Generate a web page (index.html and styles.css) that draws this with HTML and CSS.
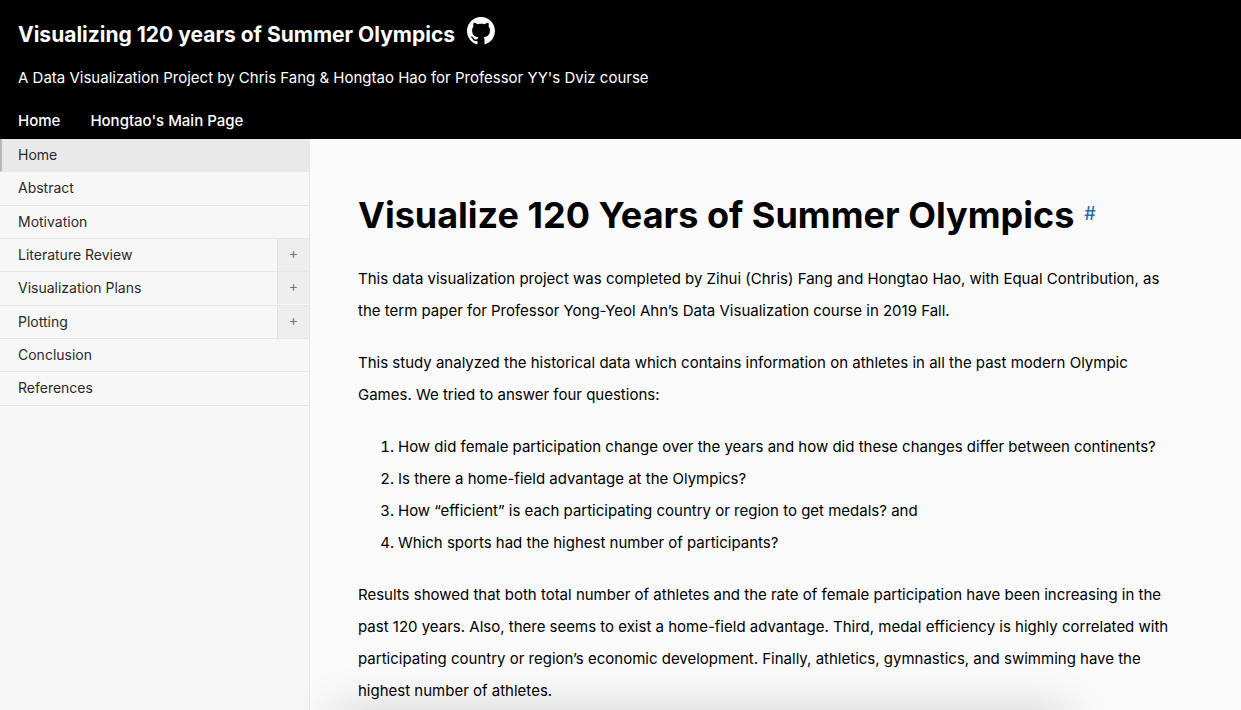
FILE: index.html
```html
<!DOCTYPE html>
<html lang="en">
<head>
<meta charset="utf-8">
<title>Visualizing 120 years of Summer Olympics</title>
<link rel="stylesheet" href="styles.css">
</head>
<body>
<header class="site-header">
  <div class="brand">
    <a class="brand-title" href="#">Visualizing 120 years of Summer Olympics</a>
    <a class="brand-icon" href="#" aria-label="GitHub">
      <svg viewBox="0 0 16 16" aria-hidden="true"><path d="M8 0C3.58 0 0 3.58 0 8c0 3.54 2.29 6.53 5.47 7.59.4.07.55-.17.55-.38 0-.19-.01-.82-.01-1.49-2.01.37-2.53-.49-2.69-.94-.09-.23-.48-.94-.82-1.13-.28-.15-.68-.52-.01-.53.63-.01 1.08.58 1.23.82.72 1.21 1.87.87 2.33.66.07-.52.28-.87.51-1.07-1.78-.2-3.64-.89-3.64-3.95 0-.87.31-1.59.82-2.15-.08-.2-.36-1.02.08-2.12 0 0 .67-.21 2.2.82.64-.18 1.32-.27 2-.27s1.36.09 2 .27c1.53-1.04 2.2-.82 2.2-.82.44 1.1.16 1.92.08 2.12.51.56.82 1.27.82 2.15 0 3.07-1.87 3.75-3.65 3.95.29.25.54.73.54 1.48 0 1.07-.01 1.93-.01 2.2 0 .21.15.46.55.38A8.01 8.01 0 0 0 16 8c0-4.42-3.58-8-8-8z"/></svg>
    </a>
  </div>
  <p class="tagline">A Data Visualization Project by Chris Fang &amp; Hongtao Hao for Professor YY's Dviz course</p>
  <nav class="top-nav">
    <a href="#">Home</a>
    <a href="#">Hongtao's Main Page</a>
  </nav>
</header>
<div class="layout">
  <nav class="sidebar">
    <ul class="menu">
      <li class="menu-item active"><a href="#">Home</a></li>
      <li class="menu-item"><a href="#">Abstract</a></li>
      <li class="menu-item"><a href="#">Motivation</a></li>
      <li class="menu-item"><a href="#">Literature Review</a><button class="toggle" aria-label="Expand Literature Review">+</button></li>
      <li class="menu-item"><a href="#">Visualization Plans</a><button class="toggle" aria-label="Expand Visualization Plans">+</button></li>
      <li class="menu-item"><a href="#">Plotting</a><button class="toggle" aria-label="Expand Plotting">+</button></li>
      <li class="menu-item"><a href="#">Conclusion</a></li>
      <li class="menu-item"><a href="#">References</a></li>
    </ul>
  </nav>
  <main class="content">
    <div class="heading">
      <h1>Visualize 120 Years of Summer Olympics</h1>
      <a class="anchor" href="#">#</a>
    </div>
    <p>This data visualization project was completed by Zihui (Chris) Fang and Hongtao Hao, with Equal Contribution, as the term paper for Professor Yong-Yeol Ahn’s Data Visualization course in 2019 Fall.</p>
    <p>This study analyzed the historical data which contains information on athletes in all the past modern Olympic Games. We tried to answer four questions:</p>
    <ol>
      <li>How did female participation change over the years and how did these changes differ between continents?</li>
      <li>Is there a home-field advantage at the Olympics?</li>
      <li>How “efficient” is each participating country or region to get medals? and</li>
      <li>Which sports had the highest number of participants?</li>
    </ol>
    <p>Results showed that both total number of athletes and the rate of female participation have been increasing in the past 120 years. Also, there seems to exist a home-field advantage. Third, medal efficiency is highly correlated with participating country or region’s economic development. Finally, athletics, gymnastics, and swimming have the highest number of athletes.</p>
  </main>
</div>
<div class="bottom-shade"></div>
</body>
</html>
```
FILE: styles.css
```css
* { box-sizing: border-box; }
html, body { height: 100%; }
body {
  margin: 0;
  display: flex;
  flex-direction: column;
  overflow: hidden;
  background: #fafafa;
  color: #000;
  font: 15px/32px Inter, "Liberation Sans", sans-serif;
}
a { color: inherit; text-decoration: none; }

.site-header {
  flex: none;
  padding: 13px 18px 2px;
  background: #000;
  color: #fff;
}
.brand { display: flex; align-items: center; gap: 12px; height: 44px; }
.brand-title { font-size: 21px; font-weight: 700; }
.brand-icon { display: flex; padding-bottom: 8px; }
.brand-icon svg { width: 28px; height: 28px; fill: #fff; }
.tagline { margin: 5px 0 11px; }
.top-nav { display: flex; gap: 30px; font-weight: 500; }

.layout { flex: 1; display: grid; grid-template-columns: 310px 1fr; }
.sidebar { border-right: 1px solid #e7e7e7; background: #f7f7f7; }
.menu { margin: 0; padding: 0; list-style: none; font-size: 14px; color: #2a2a2a; }
.menu-item { display: flex; border-bottom: 1px solid #e7e7e7; }
.menu-item:nth-child(3n + 2) { padding-bottom: 1px; }
.menu-item a { flex: 1; padding-left: 18px; }
.active { background: #e9e9e9; border-left: 2px solid #b9b9b9; }
.active a { padding-left: 16px; }
.toggle {
  width: 32px;
  padding: 0 0 4px;
  border: 0;
  border-left: 1px solid #e0e0e0;
  background: #eee;
  color: #777;
  font: inherit;
  line-height: 28px;
}

.content { padding: 48px 68px 0 48px; }
.heading { display: flex; align-items: center; gap: 10px; margin-bottom: 19px; }
.content h1 { margin: 0; font-size: 36px; line-height: 57px; font-weight: 700; }
.anchor { padding-bottom: 4px; font-size: 18px; font-weight: 500; color: #2a6cab; }
.content p { margin: 0 0 20px; }
.content ol { margin: 0 0 20px; padding-left: 40px; }

.bottom-shade {
  position: fixed;
  bottom: -44px;
  left: 345px;
  right: 185px;
  height: 30px;
  box-shadow: 0 0 50px 10px rgba(0, 0, 0, 0.2);
}
```
